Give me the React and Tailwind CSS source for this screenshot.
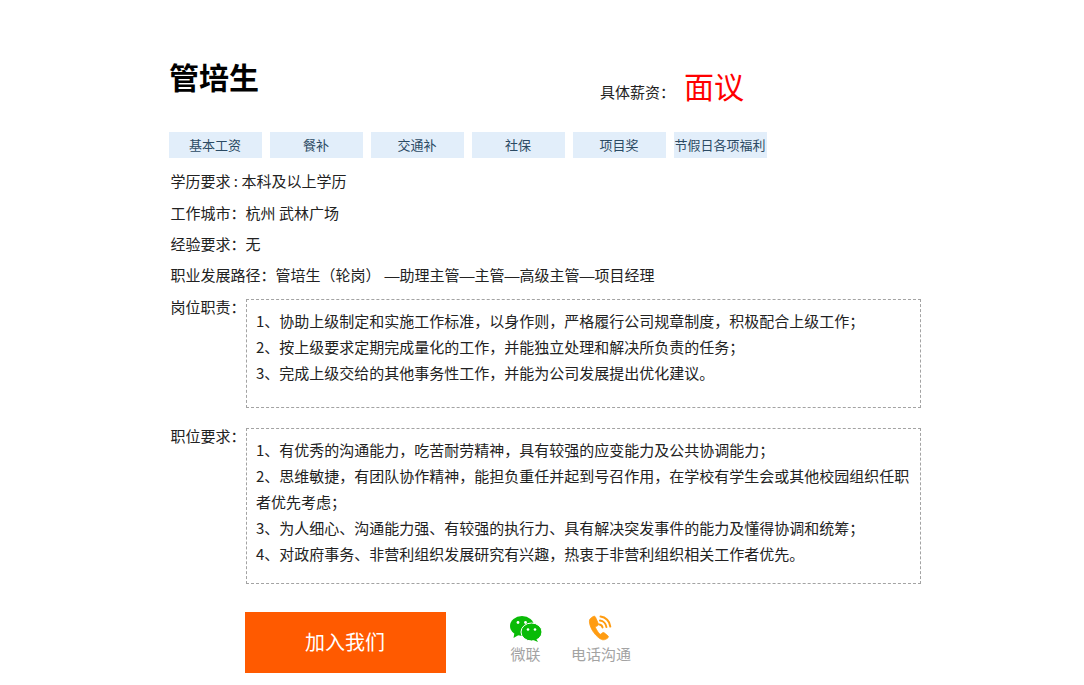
import { Fragment } from "react";

const TAGS = ["基本工资", "餐补", "交通补", "社保", "项目奖", "节假日各项福利"];

const INFO = [
  ["学历要求 : ", "本科及以上学历"],
  ["工作城市：", "杭州 武林广场"],
  ["经验要求：", "无"],
  ["职业发展路径：", "管培生（轮岗）—助理主管—主管—高级主管—项目经理"],
];

const DUTIES = [
  "1、协助上级制定和实施工作标准，以身作则，严格履行公司规章制度，积极配合上级工作；",
  "2、按上级要求定期完成量化的工作，并能独立处理和解决所负责的任务；",
  "3、完成上级交给的其他事务性工作，并能为公司发展提出优化建议。",
];

const REQUIREMENTS = [
  "1、有优秀的沟通能力，吃苦耐劳精神，具有较强的应变能力及公共协调能力；",
  "2、思维敏捷，有团队协作精神，能担负重任并起到号召作用，在学校有学生会或其他校园组织任职者优先考虑；",
  "3、为人细心、沟通能力强、有较强的执行力、具有解决突发事件的能力及懂得协调和统筹；",
  "4、对政府事务、非营利组织发展研究有兴趣，热衷于非营利组织相关工作者优先。",
];

function WechatIcon() {
  return (
    <svg viewBox="0 0 32 26" className="h-[26px] w-[32px]">
      <ellipse cx="12" cy="10" rx="12" ry="10" fill="#09bb07" />
      <path d="M4.500 16.500 3.500 22l6-3.500z" fill="#09bb07" />
      <ellipse cx="21.500" cy="16" rx="10.500" ry="9" fill="#09bb07" stroke="#fff" strokeWidth="1" />
      <path d="M26 22.500 28 26l-6-2.500z" fill="#09bb07" />
      <circle cx="8" cy="6.500" r="1.400" fill="#fff" />
      <circle cx="15.500" cy="6.500" r="1.400" fill="#fff" />
      <circle cx="18" cy="13.500" r="1.300" fill="#fff" />
      <circle cx="25" cy="13.500" r="1.300" fill="#fff" />
    </svg>
  );
}

function PhoneIcon() {
  return (
    <svg viewBox="0 0 24 26" className="h-[26px] w-[24px]" fill="none">
      <path
        d="M6.200 1.200c-1 .1-4 1.900-4.600 3.600C.9 7 2 11.600 4.600 15.800c2.700 4.300 6.800 8.300 10.100 9 1.800.4 4.700-1.200 5.400-2.200.5-.7.300-1.300-.2-1.800l-3.700-3c-.6-.4-1.200-.4-1.700 0l-1.500 1.300c-.4.300-.8.300-1.200 0-1.300-1.100-3.700-4.800-4.300-6.500-.2-.5 0-.9.400-1.100l1.900-.9c.6-.3.800-.9.700-1.500L7.500 2.200c-.2-.7-.7-1-1.300-1z"
        fill="#ff9c12"
        stroke="#ff9c12"
        strokeWidth="0.800"
      />
      <path d="M11.500 9.400c1.500.3 2.700 1.500 3 3" stroke="#ff9c12" strokeWidth="2" strokeLinecap="round" />
      <path d="M12 5.500c3.300.4 6 3.100 6.400 6.500" stroke="#ff9c12" strokeWidth="2" strokeLinecap="round" />
      <path d="M12.500 1.600c5.200.5 9.300 4.700 9.800 10" stroke="#ff9c12" strokeWidth="2" strokeLinecap="round" />
    </svg>
  );
}

function TextBox({ label, lines, height, className }) {
  return (
    <div className={`flex ${className}`}>
      <div className="ml-[1.500px] w-[75.500px] shrink-0 whitespace-nowrap text-[15px] leading-[15px]">{label}</div>
      <div className={`w-[675px] border border-dashed border-[#a3a3a3] px-[9px] pt-[8px] text-[15px] leading-[26px] text-[#222] ${height}`}>
        {lines.map((line) => (
          <p key={line}>{line}</p>
        ))}
      </div>
    </div>
  );
}

export default function App() {
  return (
    <div
      className="h-[685px] overflow-hidden bg-white pl-[169px] pt-[58px] text-[#222]"
      style={{ fontFamily: '"Noto Sans CJK SC", "Liberation Sans", sans-serif' }}
    >
      <div className="flex h-[74px] items-start">
        <h1 className="w-[431px] text-[30px] font-bold leading-[36px] text-black">管培生</h1>
        <span className="mt-[24px] w-[84px] whitespace-nowrap text-[15px] leading-[20px]">具体薪资：</span>
        <span className="mt-[7px] text-[30px] leading-[40px] text-[#ff0000]">面议</span>
      </div>

      <div className="flex gap-2">
        {TAGS.map((tag) => (
          <span
            key={tag}
            className="flex h-[26px] w-[93px] items-center justify-center whitespace-nowrap bg-[#e2eefa] pr-[1px] text-[13px] text-[#2b4a63]"
          >
            {tag}
          </span>
        ))}
      </div>

      <div className="ml-[1.500px] mt-[7.400px]">
        {INFO.map(([name, value]) => (
          <p key={name} className="h-[31.300px] whitespace-pre text-[15px] leading-[31px]">
            {name}
            {/* the CJK font's dash is short, Arial's is a full em like the reference */}
            {value.split("—").map((part, i) => (
              <Fragment key={part}>
                {i > 0 && <span className={`font-['Liberation_Sans'] ${i === 1 ? "ml-[4px]" : ""}`}>—</span>}
                {part}
              </Fragment>
            ))}
          </p>
        ))}
      </div>

      <TextBox label="岗位职责：" lines={DUTIES} height="h-[109px]" className="mt-[8.400px]" />
      <TextBox label="职位要求：" lines={REQUIREMENTS} height="h-[156px]" className="mt-[20px]" />

      <div className="ml-[76px] mt-[28px] flex">
        <button className="h-[61px] w-[201px] bg-[#ff5a00] pr-[1px] text-[20px] text-white">加入我们</button>
        <div className="ml-[64px] mt-[4px] flex w-[32px] flex-col items-center">
          <WechatIcon />
          <span className="mt-[2px] whitespace-nowrap pr-[1px] text-[15px] leading-[20px] text-[#a3a3a3]">微联</span>
        </div>
        <div className="ml-[29px] mt-[3px] flex w-[60px] flex-col items-center">
          <div className="mr-[3px]">
            <PhoneIcon />
          </div>
          <span className="mt-[3px] whitespace-nowrap text-[15px] leading-[20px] text-[#a3a3a3]">电话沟通</span>
        </div>
      </div>
    </div>
  );
}
